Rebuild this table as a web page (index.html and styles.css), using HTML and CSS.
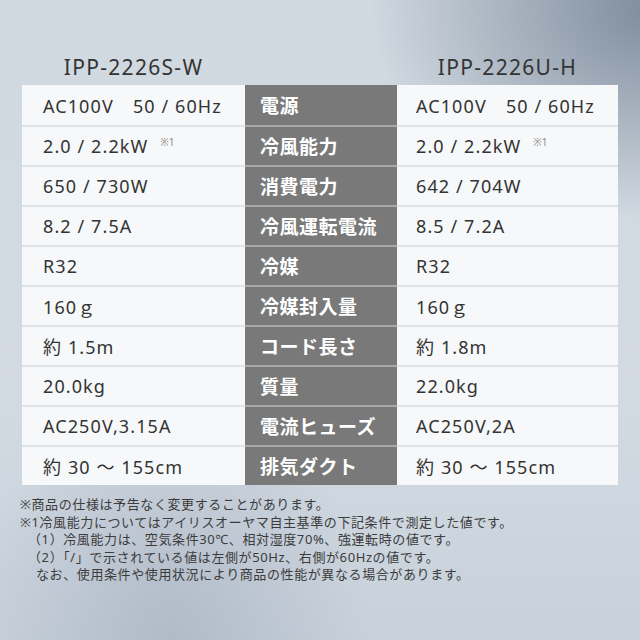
FILE: index.html
```html
<!DOCTYPE html>
<html lang="ja">
<head>
<meta charset="utf-8">
<link rel="stylesheet" href="styles.css">
</head>
<body>
<div class="page">
  <div class="heads">
    <div class="model">IPP-2226S-W</div>
    <div class="spacer"></div>
    <div class="model">IPP-2226U-H</div>
  </div>
  <div class="spec">
    <div class="row"><div class="val">AC100V　50 / 60Hz</div><div class="lbl">電源</div><div class="val r">AC100V　50 / 60Hz</div></div>
    <div class="row"><div class="val">2.0 / 2.2kW <sup class="note">※1</sup></div><div class="lbl">冷風能力</div><div class="val r">2.0 / 2.2kW <sup class="note">※1</sup></div></div>
    <div class="row"><div class="val">650 / 730W</div><div class="lbl">消費電力</div><div class="val r">642 / 704W</div></div>
    <div class="row"><div class="val">8.2 / 7.5A</div><div class="lbl">冷風運転電流</div><div class="val r">8.5 / 7.2A</div></div>
    <div class="row"><div class="val">R32</div><div class="lbl">冷媒</div><div class="val r">R32</div></div>
    <div class="row"><div class="val">160ｇ</div><div class="lbl">冷媒封入量</div><div class="val r">160ｇ</div></div>
    <div class="row"><div class="val">約 1.5m</div><div class="lbl">コード長さ</div><div class="val r">約 1.8m</div></div>
    <div class="row"><div class="val">20.0kg</div><div class="lbl">質量</div><div class="val r">22.0kg</div></div>
    <div class="row"><div class="val">AC250V,3.15A</div><div class="lbl">電流ヒューズ</div><div class="val r">AC250V,2A</div></div>
    <div class="row"><div class="val">約 30 ～ 155cm</div><div class="lbl">排気ダクト</div><div class="val r">約 30 ～ 155cm</div></div>
  </div>
  <div class="notes">
    <p>※商品の仕様は予告なく変更することがあります。</p>
    <p>※1冷風能力についてはアイリスオーヤマ自主基準の下記条件で測定した値です。</p>
    <p class="ind">（1）冷風能力は、空気条件30℃、相対湿度70%、強運転時の値です。</p>
    <p class="ind">（2）「/」で示されている値は左側が50Hz、右側が60Hzの値です。</p>
    <p class="ind2">なお、使用条件や使用状況により商品の性能が異なる場合があります。</p>
  </div>
</div>
</body>
</html>
```
FILE: styles.css
```css
html, body {
  margin: 0;
  padding: 0;
}
body {
  width: 640px;
  height: 640px;
  overflow: hidden;
  font-family: "Noto Sans", "Noto Sans CJK JP", sans-serif;
  color: #333;
  background:
    radial-gradient(ellipse 280px 210px at 650px 10px, rgba(118,133,150,0.9), rgba(118,133,150,0) 100%),
    radial-gradient(ellipse 200px 260px at 170px 640px, rgba(160,172,188,0.6), rgba(160,172,188,0) 100%),
    linear-gradient(180deg, #d0d8e0 0%, #d3dae2 60%, #c8d1db 100%);
}
.page {
  padding: 0 22px;
}
.heads {
  display: grid;
  grid-template-columns: 223px 152px 221px;
  height: 85px;
  align-items: end;
}
.model {
  text-align: center;
  font-size: 21px;
  letter-spacing: 1.3px;
  color: #333;
  line-height: 30px;
  padding-bottom: 3px;
}
.spec {
  display: flex;
  flex-direction: column;
}
.row {
  display: grid;
  grid-template-columns: 223px 152px 221px;
  height: 40px;
}
.row + .row .val {
  border-top: 2px solid #dfe2e6;
}
.row + .row .lbl {
  border-top: 2px solid #a8a8a8;
}
.val {
  background: #f7f8f9;
  display: flex;
  align-items: center;
  padding-left: 21px;
  font-size: 18px;
  letter-spacing: 1.1px;
  color: #333;
}
.val.r {
  padding-left: 19px;
}
.lbl {
  background: #797979;
  color: #fff;
  display: flex;
  align-items: center;
  padding-left: 15px;
  font-size: 19px;
  font-weight: 700;
  letter-spacing: 0.5px;
}
.note {
  font-size: 10px;
  color: #888;
  align-self: flex-start;
  margin-top: 8px;
  margin-left: 12px;
  letter-spacing: 0;
  vertical-align: baseline;
}
.notes {
  padding: 11px 0 0 0;
  font-size: 13px;
  line-height: 17.5px;
  letter-spacing: 0.6px;
  color: #3c3c3c;
  margin-left: -2px;
}
.notes p {
  margin: 0;
}
.notes .ind {
  margin-left: 8px;
}
.notes .ind2 {
  margin-left: 16px;
}
```
